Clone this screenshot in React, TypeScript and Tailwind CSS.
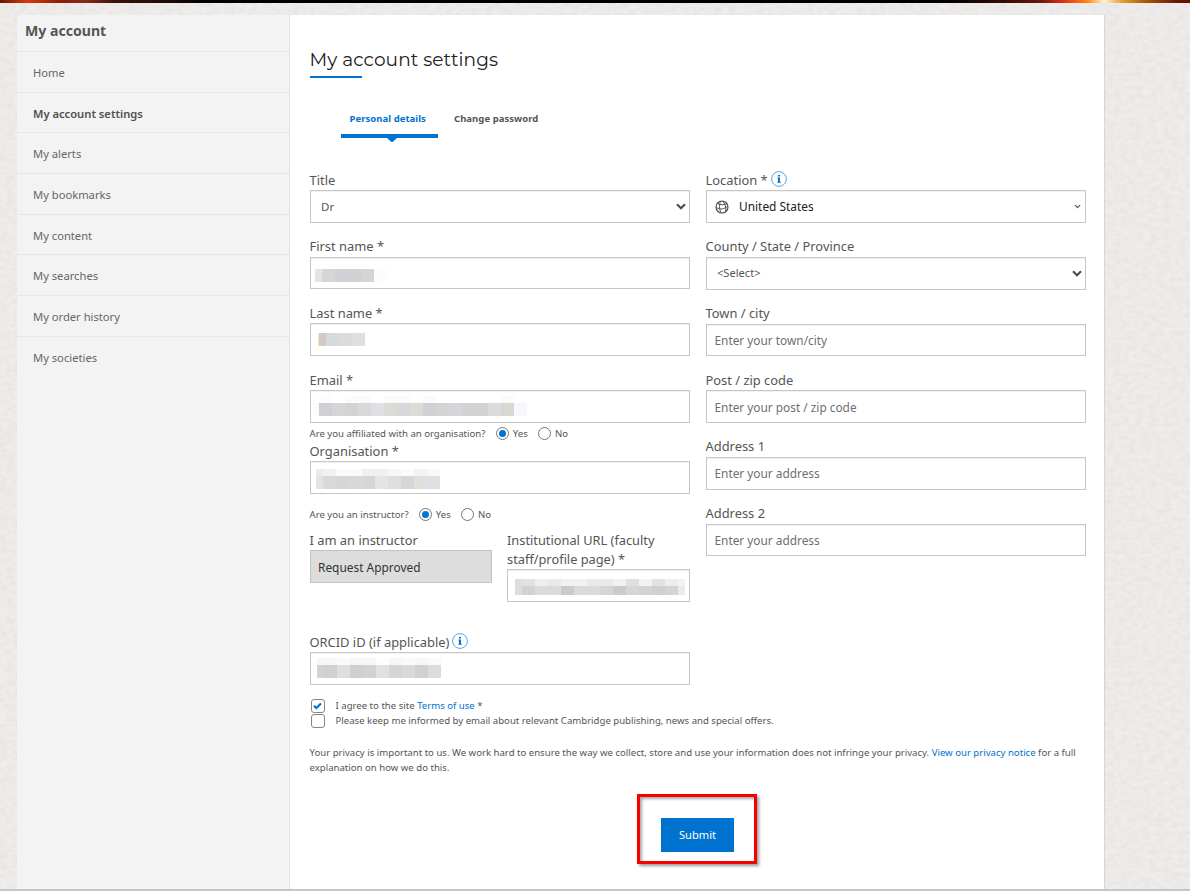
import React from "react";
import { ChevronDown } from "lucide-react";

const menu = [
  "Home",
  "My account settings",
  "My alerts",
  "My bookmarks",
  "My content",
  "My searches",
  "My order history",
  "My societies",
];

type Cell = [number, string];

const box =
  "h-[32.7px] w-full border border-[#c6c6c6] bg-white shadow-[inset_0_1px_1px_rgba(0,0,0,0.06)]";

const Label = ({ children }: { children: React.ReactNode }) => (
  <label className="-ml-[0.5px] flex h-[19.5px] items-center gap-[3px] text-[12.9px] leading-[19.5px] whitespace-nowrap">
    {children}
  </label>
);

const Info = () => (
  <svg width="16" height="16" viewBox="0 0 16 16" className="-mt-[3px]">
    <circle cx="8" cy="8" r="7.4" fill="none" stroke="#5ba4de" strokeWidth="1" />
    <path d="M7 4h2v1.5H7z M6.3 6.6H9v4.2h.8v.9H6.3v-.9H7V7.5h-.7z" fill="#0072cf" />
  </svg>
);

const Globe = () => (
  <svg width="14" height="14" viewBox="0 0 14 14" fill="none" stroke="#505050" strokeWidth="1">
    <circle cx="7" cy="7" r="6" strokeWidth="1.2" />
    <path d="M1 7.2C4 9.800 9 9.500 12.800 6.200M2.500 3.500c3 1.600 6.500 1.600 9.300.200M5.800 1.100C3.800 4.500 4 9 6.300 12.800M7.500 1.100c2.800 2.600 3.900 6.400 3 10.400" />
  </svg>
);

const Caret = () => (
  <svg width="10" height="7" viewBox="0 0 10 7" fill="none" stroke="#4c4c4c" strokeWidth="2.1">
    <path d="M1 1.2l4 4 4-4" />
  </svg>
);

// blurred out value, one array of cells per row
const Masked = ({ rows, heights }: { rows: Cell[][]; heights: number[] }) => (
  <div className="flex flex-col">
    {rows.map((row, i) => (
      <div key={i} className="flex" style={{ height: heights[i] }}>
        {row.map(([w, color], j) => (
          <span key={j} className="flex-none" style={{ width: w, backgroundColor: color }} />
        ))}
      </div>
    ))}
  </div>
);

const TextField = ({ label, placeholder }: { label: string; placeholder: string }) => (
  <div className="h-[66.7px]">
    <Label>{label}</Label>
    <div className={`${box} flex items-center pt-[2px] pl-[7.5px] text-[11.85px] text-[#6f6f6f]`}>
      {placeholder}
    </div>
  </div>
);

const Radio = ({ label, checked }: { label: string; checked?: boolean }) => (
  <span className="flex items-center gap-[4.3px]">
    <span className="flex size-[13px] items-center justify-center rounded-full border border-[#767676]">
      {checked && <span className="size-[7px] rounded-full bg-[#0075d5]" />}
    </span>
    <span className="pt-px">{label}</span>
  </span>
);

const Check = ({ checked }: { checked?: boolean }) => (
  <span className="flex size-[14px] flex-none items-center justify-center rounded-[3px] border border-[#858585] bg-white">
    {checked && (
      <svg width="9" height="8" viewBox="0 0 9 8" fill="none" stroke="#0072cf" strokeWidth="2.1">
        <path d="M1 3.8l2.3 2.3L8 1.4" />
      </svg>
    )}
  </span>
);

const Sidebar = () => (
  <aside className="w-[273px] flex-none rounded-tl border-r border-[#e4e4e4] bg-[#f3f3f3]">
    <h2 className="h-9 pl-2 text-[14.1px] leading-[32px] font-bold text-[#555]">My account</h2>
    <ul>
      {menu.map((item) => (
        <li
          key={item}
          className={`h-[40.67px] border-t border-[#e6e6e6] pl-4 text-[11.2px] leading-[41px] ${
            item === "My account settings" ? "font-semibold text-[#505050]" : "text-[#666]"
          }`}
        >
          {item}
        </li>
      ))}
    </ul>
  </aside>
);

const LeftColumn = () => (
  <div className="w-[380px]">
    <div className="h-[66.7px]">
      <Label>Title</Label>
      <div className={`${box} flex items-center justify-between pr-[3px] pl-[10px] text-[11.5px]`}>
        Dr <Caret />
      </div>
    </div>
    <div className="h-[66.7px]">
      <Label>First name *</Label>
      <div className={`${box} pt-[11px] pl-1`}>
        <Masked
          heights={[13]}
          rows={[[[7, "#e6e4e5"], [13, "#d7d6d4"], [13, "#d0d1d6"], [13, "#d2d0d3"], [13, "#d6d5d3"], [13, "#fbfcfe"]]]}
        />
      </div>
    </div>
    <div className="h-[66.7px]">
      <Label>Last name *</Label>
      <div className={`${box} pt-[9px] pl-[7px]`}>
        <Masked
          heights={[13]}
          rows={[[[1, "#ffe7bd"], [7, "#d1cac9"], [13, "#d5dade"], [13, "#dbdcd9"], [13, "#dfdfdf"]]]}
        />
      </div>
    </div>
    <div className="h-[52.2px]">
      <Label>Email *</Label>
      <div className={`${box} pt-[5px] pl-[2px]`}>
        <Masked
          heights={[7, 13]}
          rows={[
            [[6, "#fff"], [13, "#fcfcfc"], [13, "#fff"], [26, "#fbfbfb"], [13, "#fff"], [26, "#fbfbfb"], [13, "#fff"], [13, "#fbfbfb"], [65, "#fff"], [13, "#fbfbfb"]],
            [[6, "#fbfcf5"], [13, "#d0cfd6"], [13, "#d6d6d6"], [13, "#d3d3d3"], [13, "#d9d9da"], [13, "#dfe0e3"], [13, "#dcdad7"], [13, "#d6d8db"], [13, "#dcdbd8"], [13, "#cfd1d3"], [13, "#d5d3d4"], [13, "#d4d6da"], [13, "#d5d2d4"], [13, "#d3d3d4"], [13, "#dadbde"], [13, "#d8d7d2"], [13, "#f7f8fd"]],
          ]}
        />
      </div>
    </div>
    <div className="-ml-[0.5px] flex h-[18.8px] items-center pt-[3px] text-[9.6px]">
      <span className="w-[186px] pt-px">Are you affiliated with an organisation?</span>
      <span className="flex gap-[10px]">
        <Radio label="Yes" checked />
        <Radio label="No" />
      </span>
    </div>
    <div>
      <Label>Organisation *</Label>
      <div className={`${box} pt-[7px] pl-[5px]`}>
        <Masked
          heights={[7, 13]}
          rows={[
            [[7, "#ebebeb"], [13, "#f1f1f1"], [26, "#fafafa"], [26, "#f0f0f0"], [13, "#f6f6f6"], [13, "#fbfbfb"], [13, "#f3f3f2"], [13, "#f8f8f8"]],
            [[7, "#e6e2e2"], [13, "#d8dad8"], [13, "#d9d5d2"], [13, "#d5d9dc"], [13, "#d6d6d6"], [13, "#e3e4e6"], [13, "#dfdeda"], [13, "#d3d7d5"], [13, "#e0dfda"], [13, "#dfe0e5"]],
          ]}
        />
      </div>
    </div>
    <div className="-ml-[0.5px] flex h-[36.8px] items-center pt-[5px] text-[9.6px]">
      <span className="w-[109px] pt-px">Are you an instructor?</span>
      <span className="flex gap-[10px]">
        <Radio label="Yes" checked />
        <Radio label="No" />
      </span>
    </div>
    <div className="flex h-[102px] justify-between">
      <div className="w-[182px]">
        <Label>I am an instructor</Label>
        <div className="flex h-[33px] items-center border border-[#c2c2c2] bg-[#ddd] pt-[2px] pl-[7px] text-[11.9px] text-[#333]">
          Request Approved
        </div>
      </div>
      <div className="w-[183px]">
        <p className="text-[12.8px] leading-[19.3px] whitespace-nowrap">
          Institutional URL (faculty
          <br />
          staff/profile page) *
        </p>
        <div className={`${box} pt-[9px] pl-[7px]`}>
          <Masked
            heights={[7, 9]}
            rows={[
              [[7, "#dedede"], [13, "#e1e1e1"], [13, "#eee"], [13, "#e9e9e9"], [26, "#f1f1f1"], [26, "#e9e9e9"], [13, "#f1f1f1"], [13, "#e0e0e0"], [13, "#f2f2f2"], [13, "#e2e2e2"], [13, "#ededed"], [7, "#f3f3f3"]],
              [[7, "#ddd"], [13, "#d2d2d2"], [26, "#dbdbdb"], [13, "#cacaca"], [26, "#dadada"], [13, "#d5d5d5"], [13, "#cbcbcb"], [13, "#d6d6d6"], [13, "#d3d3d3"], [13, "#d0d0d0"], [13, "#d4d4d4"], [7, "#ebebeb"]],
            ]}
          />
        </div>
      </div>
    </div>
    <div>
      <Label>
        ORCID iD (if applicable) <Info />
      </Label>
      <div className={`${box} pt-[5px] pl-[6px]`}>
        <Masked
          heights={[7, 13]}
          rows={[
            [[20, "#f7f7f7"], [13, "#fafafa"], [26, "#f6f6f6"], [13, "#fdfdfd"], [13, "#f7f7f7"], [13, "#fafafa"], [13, "#f6f6f6"], [13, "#fafafa"]],
            [[7, "#d3d3d3"], [13, "#d0d0d0"], [13, "#dedede"], [13, "#cfcfcf"], [13, "#d2d2d2"], [13, "#e1e1e1"], [13, "#d5d5d5"], [13, "#d9d9d9"], [13, "#d0d0d0"], [13, "#dcdcdc"]],
          ]}
        />
      </div>
    </div>
  </div>
);

const RightColumn = () => (
  <div className="w-[380px] pt-[0.2px]">
    <div className="h-[66.7px]">
      <Label>
        Location * <Info />
      </Label>
      <div className={`${box} flex items-center pr-[3px] pl-[8px] text-[11.9px] text-[#222]`}>
        <Globe />
        <span className="ml-[10px] flex-1 pt-px">United States</span>
        <ChevronDown size={9} strokeWidth={3.4} className="text-[#555]" />
      </div>
    </div>
    <div className="h-[66.7px]">
      <Label>County / State / Province</Label>
      <div className={`${box} flex items-center justify-between pr-[3px] pl-[10px] text-[11.1px]`}>
        <span className="pt-px">&lt;Select&gt;</span> <Caret />
      </div>
    </div>
    <TextField label="Town / city" placeholder="Enter your town/city" />
    <TextField label="Post / zip code" placeholder="Enter your post / zip code" />
    <TextField label="Address 1" placeholder="Enter your address" />
    <TextField label="Address 2" placeholder="Enter your address" />
  </div>
);

export default function App() {
  return (
    <div className="relative flex h-[891px] w-[1190px] flex-col overflow-hidden bg-[#eeedec] font-['Noto_Sans',sans-serif] text-[#555]">
      {/* paper texture */}
      <svg className="absolute inset-0 h-full w-full">
        <filter id="paper" colorInterpolationFilters="sRGB">
          <feTurbulence type="fractalNoise" baseFrequency="0.14 0.22" numOctaves="4" seed="4" />
          <feColorMatrix values="0 0 0 0 0.5  0 0 0 0 0.5  0 0 0 0 0.49  0.14 0 0 0 -0.045" />
        </filter>
        <rect width="100%" height="100%" filter="url(#paper)" />
      </svg>
      <div className="relative h-[3px] flex-none bg-[linear-gradient(90deg,#6b1a05_0px,#d93a08_28px,#8c1c08_60px,#8a2a18_85px,#3a1208_115px,#1c0b05_170px,#000_200px,#000_950px,#3c0e05_1010px,#6b1608_1040px,#e83410_1065px,#ff8a10_1088px,#fff3d8_1104px,#e0a030_1122px,#a85a08_1145px,#6b1a05_1175px,#5c1204_1190px)]" />
      <div className="relative mt-3 ml-[17px] flex w-[1087px] flex-1">
        <Sidebar />
        <main className="flex-1 bg-white pt-[31px] pl-5 shadow-[1px_0_1px_rgba(0,0,0,0.08)]">
          <h1 className="-ml-[0.5px] h-[26px] pt-px font-[Montserrat,Inter,sans-serif] text-[18.5px] leading-[26px] tracking-[0.08px] text-[#222]">
            My account settings
          </h1>
          <div className="mt-1 h-[2px] w-[52px] bg-[#0072cf]" />
          <div className="mt-[31.5px] ml-[31px] flex h-[61px] text-[9.5px] leading-[18px] font-bold tracking-[0.05px]">
            <div className="flex w-[97px] flex-col">
              <span className="pl-[8.5px] whitespace-nowrap text-[#0072cf]">Personal details</span>
              <span className="mt-[6.5px] h-1 bg-[#0072cf]" />
              <svg width="10" height="4" viewBox="0 0 10 4" className="ml-[46px]">
                <path d="M0 0h10L5 4.5z" fill="#0072cf" />
              </svg>
            </div>
            <span className="pl-4">Change password</span>
          </div>
          <div className="flex gap-4">
            <LeftColumn />
            <RightColumn />
          </div>
          <div className="mt-[14px] -ml-[0.5px] text-[9.6px] leading-[14.5px]">
            <div className="flex h-[14.7px] items-center gap-[11px] pl-px">
              <Check checked />
              <span className="pt-px">
                I agree to the site <a className="text-[#0072cf]">Terms of use</a> *
              </span>
            </div>
            <div className="flex h-[14.7px] items-center gap-[11px] pl-px">
              <Check />
              <span>Please keep me informed by email about relevant Cambridge publishing, news and special offers.</span>
            </div>
          </div>
          <p className="mt-[17px] -ml-[0.5px] text-[9.6px] leading-[15px] whitespace-nowrap">
            Your privacy is important to us. We work hard to ensure the way we collect, store and use your information does not infringe your privacy.{" "}
            <a className="text-[#0072cf]">View our privacy notice</a> for a full
            <br />
            explanation on how we do this.
          </p>
          <div className="mt-[19px] ml-[327px] flex h-[70px] w-[120px] items-center justify-center border-[3px] border-[#f90000] pt-[12px] shadow-[2px_2px_3px_rgba(0,0,0,0.4),inset_2px_2px_3px_rgba(0,0,0,0.35)]">
            <button className="h-[34px] w-[73px] bg-[#0072cf] pl-px text-[11.1px] text-white">Submit</button>
          </div>
        </main>
      </div>
      <div className="relative h-[2px] flex-none bg-[#c5c6c8]" />
    </div>
  );
}
